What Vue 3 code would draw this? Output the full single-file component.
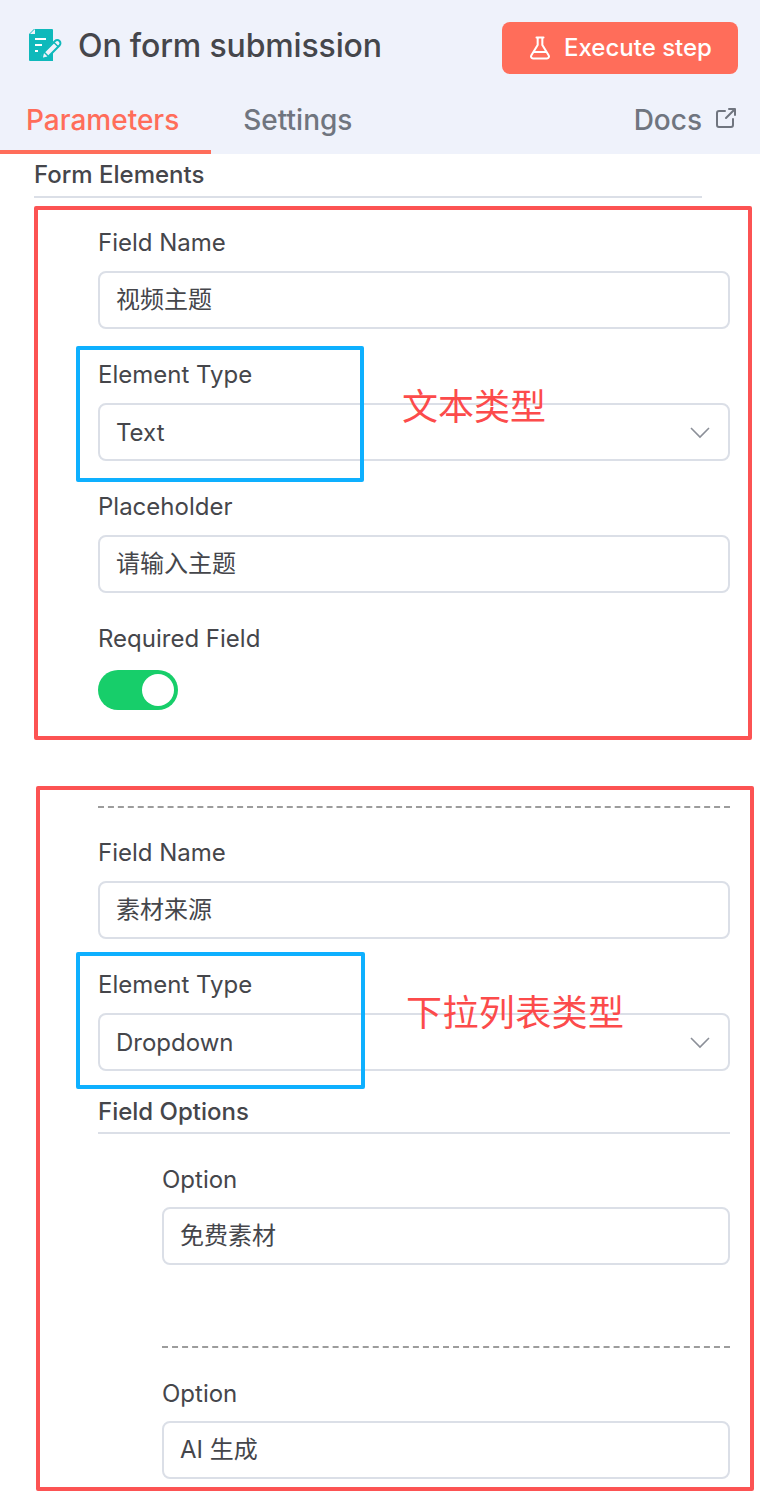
<script setup>
const textFields = [
  { label: 'Field Name', value: '视频主题', cjk: true },
  { label: 'Element Type', value: 'Text', select: true },
  { label: 'Placeholder', value: '请输入主题', cjk: true },
]
const dropFields = [
  { label: 'Field Name', value: '素材来源', cjk: true },
  { label: 'Element Type', value: 'Dropdown', select: true },
]
</script>

<template>
  <div class="page">
    <header class="head">
      <div class="title-row">
        <div class="title">
          <svg class="node-icon" viewBox="0 0 34 34" width="34" height="34">
            <path d="M5 1h18a1 1 0 0 1 1 1v12l-11 12-1 5 5-1 7-7v10H1a1 1 0 0 1-1-1V6z" fill="#0fb9bb" transform="translate(1 0)"/>
            <path d="M1 6l5-5v5z" fill="#eff2fb" transform="translate(1 0)"/>
            <path d="M7 11h11M7 17h7M7 23h3" stroke="#fff" stroke-width="2" fill="none"/>
            <path d="M15 25l-1.500 6 6-1.500 12-12a2.500 2.500 0 0 0-4.500-4.500z" fill="#eff2fb" stroke="#0fb9bb" stroke-width="2" stroke-linejoin="round"/>
            <path d="M26 14.500l4.500 4.500M16 24l4 4" stroke="#0fb9bb" stroke-width="1.500"/>
          </svg>
          <span>On form submission</span>
        </div>
        <button class="exec">
          <svg viewBox="0 0 24 24" width="28" height="28" fill="none" stroke="#fff" stroke-width="1.750" stroke-linecap="round" stroke-linejoin="round">
            <path d="M9 3h6M10 3v6.500L4.500 18.500A1.700 1.700 0 0 0 6 21h12a1.700 1.700 0 0 0 1.500-2.500L14 9.500V3M7.500 15.500h9"/>
          </svg>
          <span>Execute step</span>
        </button>
      </div>
      <nav class="tabs">
        <a class="tab active">Parameters</a>
        <a class="tab">Settings</a>
        <a class="docs">
          <span>Docs</span>
          <svg viewBox="0 0 24 24" width="24" height="24" fill="none" stroke="#70757f" stroke-width="2" stroke-linecap="round" stroke-linejoin="round">
            <path d="M11 5H5a2 2 0 0 0-2 2v12a2 2 0 0 0 2 2h12a2 2 0 0 0 2-2v-6M12 12L21 3M15 3h6v6"/>
          </svg>
        </a>
      </nav>
    </header>

    <main class="body">
      <div class="section-title">Form Elements</div>

      <div class="form">
        <div v-for="f in textFields" :key="f.label" class="field">
          <label class="label">{{ f.label }}</label>
          <div class="input">
            <span :class="{ cjk: f.cjk }">{{ f.value }}</span>
            <svg v-if="f.select" class="chev" viewBox="0 0 20 12" width="20" height="12" fill="none" stroke="#8b8f98" stroke-width="1.600"><path d="M1 1l9 9 9-9"/></svg>
          </div>
        </div>
        <div class="field">
          <label class="label">Required Field</label>
          <div class="toggle"><i></i></div>
        </div>

        <hr class="dash first" />

        <div v-for="f in dropFields" :key="f.label" class="field">
          <label class="label">{{ f.label }}</label>
          <div class="input">
            <span :class="{ cjk: f.cjk }">{{ f.value }}</span>
            <svg v-if="f.select" class="chev" viewBox="0 0 20 12" width="20" height="12" fill="none" stroke="#8b8f98" stroke-width="1.600"><path d="M1 1l9 9 9-9"/></svg>
          </div>
        </div>

        <div class="options-title">Field Options</div>
        <div class="options">
          <div class="opt">
            <label class="label">Option</label>
            <div class="input"><span class="cjk">免费素材</span></div>
          </div>
          <hr class="dash" />
          <div class="opt">
            <label class="label">Option</label>
            <div class="input"><span class="cjk">AI 生成</span></div>
          </div>
        </div>
      </div>
    </main>

    <div class="box red r1"></div>
    <div class="box red r2"></div>
    <div class="box blue b1"></div>
    <div class="box blue b2"></div>
    <div class="note n1">文本类型</div>
    <div class="note n2">下拉列表类型</div>
  </div>
</template>

<style>
body { margin: 0; background: #fff; }
</style>

<style scoped>
.page {
  position: relative;
  width: 760px;
  height: 1492px;
  overflow: hidden;
  background: #fff;
  color: #45464b;
  font-family: Inter, "Noto Sans CJK SC", sans-serif;
}
.head { height: 154px; background: #eff2fb; display: flex; flex-direction: column; }
.title-row { display: flex; justify-content: space-between; align-items: flex-start; padding: 22px 22px 0 28px; height: 90px; box-sizing: border-box; }
.title { display: flex; align-items: center; gap: 16px; height: 46px; font-size: 32px; font-weight: 500; letter-spacing: -0.15px; }
.node-icon { flex: none; }
.exec {
  display: flex; align-items: center; gap: 10px;
  width: 236px; height: 52px; padding: 0 0 0 24px; border: 0; border-radius: 8px;
  background: #ff6d5a; color: #fff;
  font: 500 24px Inter, sans-serif;
}
.exec span { padding-bottom: 2px; }
.tabs { display: flex; flex: 1; align-items: stretch; padding-right: 22px; font-size: 28px; font-weight: 500; color: #70757f; }
.tab { display: flex; align-items: center; padding: 0 32px 0 26px; box-sizing: border-box; border-bottom: 4px solid transparent; }
.tab.active { color: #ff6d5a; border-bottom-color: #ff6d5a; }
.tab + .tab { padding-left: 32px; }
.docs { margin-left: auto; display: flex; align-items: center; gap: 12px; padding-bottom: 4px; box-sizing: border-box; }
.docs svg { margin-bottom: 4px; }
.body { padding: 0 30px 0 34px; }
.section-title { height: 44px; box-sizing: border-box; padding-top: 6px; line-height: 30px; font-size: 24px; font-weight: 500; border-bottom: 2px solid #dbdfe7; margin-right: 28px; }
.form { padding: 25px 0 0 64px; }
.field { margin-bottom: 26px; }
.label { display: block; height: 40px; line-height: 40px; margin-bottom: 8px; font-size: 24px; }
.input {
  display: flex; align-items: center; justify-content: space-between;
  height: 58px; box-sizing: border-box; padding: 0 18px 0 16px;
  border: 2px solid #dbdfe7; border-radius: 8px;
  font-size: 24px;
}
.cjk { padding-bottom: 6px; }
.toggle { width: 80px; height: 40px; margin-top: 11px; border-radius: 20px; background: #17ce6a; position: relative; }
.toggle i { position: absolute; top: 4px; right: 4px; width: 32px; height: 32px; border-radius: 50%; background: #fff; }
.dash { border: 0; border-top: 2px dashed #9c9c9c; margin: 0; height: 0; }
.dash.first { margin-top: 96px; margin-bottom: 25px; }
.options-title { font-size: 24px; font-weight: 500; height: 35px; line-height: 30px; border-bottom: 2px solid #dbdfe7; }
.options { padding: 26px 0 0 64px; }
.opt .label { margin-bottom: 7px; }
.options .dash { margin: 81px 0 26px; }
.box { position: absolute; box-sizing: border-box; border-radius: 2px; pointer-events: none; }
.red { border: 4px solid #fc5353; }
.blue { border: 4px solid #0eb0ff; }
.r1 { left: 34px; top: 206px; width: 718px; height: 534px; }
.r2 { left: 36px; top: 786px; width: 718px; height: 705px; }
.b1 { left: 76px; top: 346px; width: 288px; height: 136px; }
.b2 { left: 76px; top: 952px; width: 289px; height: 137px; }
.note { position: absolute; color: #fc4b4b; font-size: 36px; line-height: 44px; font-family: "Noto Sans CJK SC", sans-serif; white-space: nowrap; }
.n1 { left: 402px; top: 382px; }
.n2 { left: 406px; top: 988px; letter-spacing: 0.4px; }
.chev { flex: none; margin-top: 1px; }
</style>
